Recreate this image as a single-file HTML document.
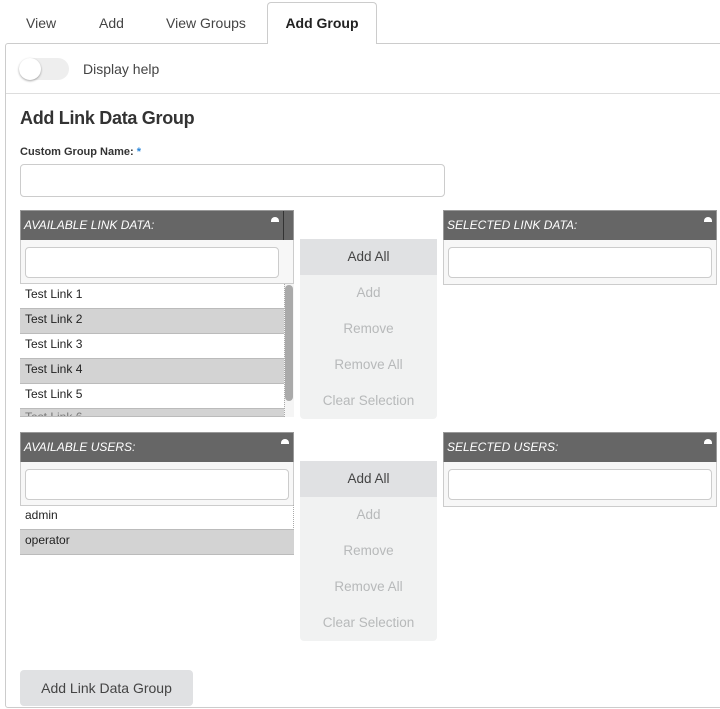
<!DOCTYPE html>
<html><head><style>
*{box-sizing:border-box;margin:0;padding:0}
body{width:720px;height:709px;background:#fff;font-family:"Liberation Sans",sans-serif;position:relative;overflow:hidden;color:#333}
.a{position:absolute}
.tab{position:absolute;top:15px;font-size:14px;color:#444}
.hdr{position:absolute;height:31px;background:#666;color:#fff;font-style:italic;font-size:12px;padding:7px 0 0 3px;border:1px solid #999}
.tri{position:absolute;top:6px;width:8px;height:5px;background:#fff;border-radius:4px 4px 0 0}
.fbox{position:absolute;background:#f7f7f7;border:1px solid #ccc;border-top:none}
.inp{position:absolute;background:#fff;border:1px solid #ccc;border-radius:4px}
.row{position:absolute;left:20px;width:264px;height:25px;font-size:12px;padding:3px 0 0 5px;color:#222;border-bottom:1px solid #bbb}
.g{background:#d3d3d3}
.btns{position:absolute;left:300px;width:137px;background:#f1f2f2;border-radius:0 0 4px 4px}
.btns div{height:36px;text-align:center;font-size:13.5px;color:#b7b9ba;line-height:36px}
.btns div:first-child{background:#e0e1e3;color:#444}
</style></head><body>
<div class="tab" style="left:26px">View</div>
<div class="tab" style="left:99px">Add</div>
<div class="tab" style="left:166px">View Groups</div>
<div class="a" style="left:267px;top:2px;width:110px;height:42px;border:1px solid #ccc;border-bottom:none;border-radius:4px 4px 0 0;background:#fff;z-index:2;text-align:center;padding-top:12px;font-size:14px;font-weight:bold;color:#222">Add Group</div>
<div class="a" style="left:5px;top:43px;width:730px;height:665px;border:1px solid #ccc;border-radius:3px"></div>
<div class="a" style="left:19px;top:58px;width:50px;height:22px;background:#eee;border-radius:11px"></div>
<div class="a" style="left:19px;top:58px;width:22px;height:22px;background:#fff;border-radius:11px;box-shadow:0 1px 2px rgba(0,0,0,.35)"></div>
<div class="a" style="left:83px;top:61px;font-size:14px;color:#444">Display help</div>
<div class="a" style="left:6px;top:93px;width:714px;height:1px;background:#ddd"></div>
<div class="a" style="left:20px;top:108px;font-size:18px;font-weight:bold;color:#333;letter-spacing:-0.3px">Add Link Data Group</div>
<div class="a" style="left:20px;top:146px;font-size:11px;font-weight:bold;color:#333">Custom Group Name: <span style="color:#2a86d9">*</span></div>
<div class="inp" style="left:20px;top:164px;width:425px;height:33px"></div>

<div class="hdr" style="left:20px;top:210px;width:274px">AVAILABLE LINK DATA:<div class="tri" style="left:250px"></div><div class="a" style="left:262px;top:0;width:1px;height:30px;background:#333"></div></div>
<div class="fbox" style="left:20px;top:240px;width:274px;height:44px"></div>
<div class="inp" style="left:25px;top:247px;width:254px;height:31px"></div>
<div class="row" style="top:284px">Test Link 1</div>
<div class="row g" style="top:309px">Test Link 2</div>
<div class="row" style="top:334px">Test Link 3</div>
<div class="row g" style="top:359px">Test Link 4</div>
<div class="row" style="top:384px">Test Link 5</div>
<div class="row g" style="top:409px;height:8px;overflow:hidden;padding-top:1px;color:#777">Test Link 6</div>
<div class="a" style="left:284px;top:284px;width:10px;height:133px;background:#f5f5f5;border-left:1px dotted #aaa"></div>
<div class="a" style="left:285px;top:285px;width:8px;height:116px;background:#aaa;border-radius:4px"></div>
<div class="btns" style="top:239px"><div>Add All</div><div>Add</div><div>Remove</div><div>Remove All</div><div>Clear Selection</div></div>
<div class="hdr" style="left:443px;top:210px;width:274px">SELECTED LINK DATA:<div class="tri" style="left:260px"></div></div>
<div class="fbox" style="left:443px;top:240px;width:274px;height:45px"></div>
<div class="inp" style="left:448px;top:247px;width:264px;height:31px"></div>

<div class="hdr" style="left:20px;top:432px;width:274px">AVAILABLE USERS:<div class="tri" style="left:260px"></div></div>
<div class="fbox" style="left:20px;top:462px;width:274px;height:44px"></div>
<div class="inp" style="left:25px;top:469px;width:264px;height:31px"></div>
<div class="row" style="top:505px;width:274px;border-right:1px dotted #aaa">admin</div>
<div class="row g" style="top:530px;width:274px">operator</div>
<div class="btns" style="top:461px"><div>Add All</div><div>Add</div><div>Remove</div><div>Remove All</div><div>Clear Selection</div></div>
<div class="hdr" style="left:443px;top:432px;width:274px">SELECTED USERS:<div class="tri" style="left:260px"></div></div>
<div class="fbox" style="left:443px;top:462px;width:274px;height:45px"></div>
<div class="inp" style="left:448px;top:469px;width:264px;height:31px"></div>

<div class="a" style="left:20px;top:670px;width:173px;height:36px;background:#e0e1e3;border-radius:4px;text-align:center;line-height:36px;font-size:14px;color:#444">Add Link Data Group</div>
</body></html>
